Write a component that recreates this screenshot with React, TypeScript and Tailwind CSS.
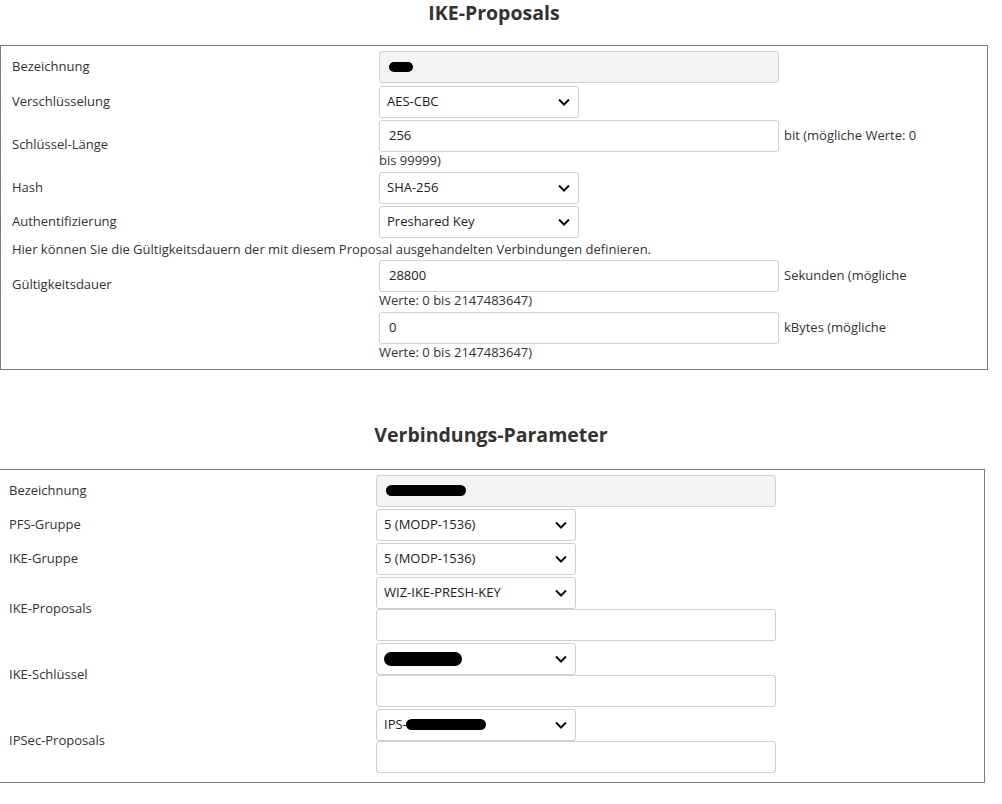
import React from 'react';

const font = { fontFamily: '"Open Sans", "Liberation Sans", sans-serif' };

function Chevron() {
  return (
    <svg width="12" height="8" viewBox="0 0 12 8" className="shrink-0">
      <path d="M1 1.5 L6 6.5 L11 1.5" fill="none" stroke="#111" strokeWidth="2" />
    </svg>
  );
}

function Select({ children }: { children: React.ReactNode }) {
  return (
    <div className="flex h-[32px] w-[200px] items-center justify-between rounded-[3px] border border-[#cfcfcf] bg-white pl-[7px] pr-[8px] text-[13px] text-[#222]">
      <div className="flex items-center">{children}</div>
      <Chevron />
    </div>
  );
}

function Input({
  children,
  disabled,
  pad = 'pl-[9px]',
}: {
  children?: React.ReactNode;
  disabled?: boolean;
  pad?: string;
}) {
  return (
    <div
      className={`flex h-[32px] w-[400px] shrink-0 items-center rounded-[3px] border border-[#d0d0d0] text-[13px] text-[#222] ${pad} ${
        disabled ? 'bg-[#f3f3f3]' : 'bg-white'
      }`}
    >
      {children}
    </div>
  );
}

function Row({ label, children }: { label?: string; children: React.ReactNode }) {
  return (
    <div className="flex items-center">
      <div className="w-[378px] shrink-0 pl-[11px] text-[13px] text-[#333]">{label}</div>
      <div className="flex flex-col">{children}</div>
    </div>
  );
}

function Hint({ text }: { text: string }) {
  return <div className="text-[13px] leading-[17px] text-[#333]">{text}</div>;
}

function InputWithUnit({ value, unit, rest }: { value: string; unit: string; rest: string }) {
  return (
    <div className="flex flex-col">
      <div className="flex items-center">
        <Input>{value}</Input>
        <span className="ml-[5px] whitespace-nowrap text-[13px] text-[#333]">{unit}</span>
      </div>
      <Hint text={rest} />
    </div>
  );
}

export default function App() {
  return (
    <div className="min-h-[804px] w-[1002px] bg-white" style={font}>
      <div className="w-[988px]">
        <h2 className="text-center text-[19.5px] font-bold leading-[26px] text-[#333]">IKE-Proposals</h2>
        <div className="mt-[19px] flex flex-col gap-[2.5px] border border-[#7a7a7a] pb-[8px] pt-[5px]">
          <Row label="Bezeichnung">
            <Input disabled>
              <span className="inline-block h-[10px] w-[24px] rounded-full bg-black" />
            </Input>
          </Row>
          <Row label="Verschlüsselung">
            <Select>AES-CBC</Select>
          </Row>
          <Row label="Schlüssel-Länge">
            <InputWithUnit value="256" unit="bit (mögliche Werte: 0" rest="bis 99999)" />
          </Row>
          <Row label="Hash">
            <Select>SHA-256</Select>
          </Row>
          <Row label="Authentifizierung">
            <Select>Preshared Key</Select>
          </Row>
          <div className="pl-[11px] text-[13px] leading-[17px] text-[#333]">
            Hier können Sie die Gültigkeitsdauern der mit diesem Proposal ausgehandelten Verbindungen definieren.
          </div>
          <Row label="Gültigkeitsdauer">
            <InputWithUnit value="28800" unit="Sekunden (mögliche" rest="Werte: 0 bis 2147483647)" />
          </Row>
          <Row>
            <InputWithUnit value="0" unit="kBytes (mögliche" rest="Werte: 0 bis 2147483647)" />
          </Row>
        </div>
      </div>

      <div className="-ml-[3px] mt-[52px] w-[988px]">
        <h2 className="text-center text-[19.5px] font-bold leading-[26px] text-[#333]">Verbindungs-Parameter</h2>
        <div className="mt-[21px] flex flex-col gap-[2px] border border-[#7a7a7a] pb-[9px] pt-[5px]">
          <Row label="Bezeichnung">
            <Input disabled>
              <span className="inline-block h-[11px] w-[80px] rounded-full bg-black" />
            </Input>
          </Row>
          <Row label="PFS-Gruppe">
            <Select>5 (MODP-1536)</Select>
          </Row>
          <Row label="IKE-Gruppe">
            <Select>5 (MODP-1536)</Select>
          </Row>
          <Row label="IKE-Proposals">
            <Select>WIZ-IKE-PRESH-KEY</Select>
            <Input />
          </Row>
          <Row label="IKE-Schlüssel">
            <Select>
              <span className="inline-block h-[14px] w-[78px] rounded-full bg-black" />
            </Select>
            <Input />
          </Row>
          <Row label="IPSec-Proposals">
            <Select>
              <span>IPS-</span>
              <span className="-ml-[1px] inline-block h-[11px] w-[80px] rounded-full bg-black" />
            </Select>
            <Input />
          </Row>
        </div>
      </div>
    </div>
  );
}
